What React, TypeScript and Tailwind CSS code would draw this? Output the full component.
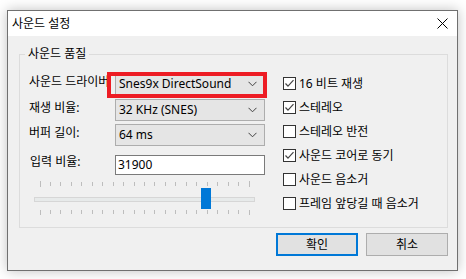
import React from "react";

const FONT = { fontFamily: '"Noto Sans", "Noto Sans CJK KR", sans-serif' };

function Chevron() {
  return (
    <svg width="9" height="6" viewBox="0 0 9 6" className="shrink-0">
      <polyline points="0.5,0.8 4.5,4.8 8.5,0.8" fill="none" stroke="#404040" strokeWidth="1" />
    </svg>
  );
}

function Combo({ value }: { value: string }) {
  return (
    <div className="flex items-center justify-between w-[150px] h-[22px] border border-[#adadad] bg-[#e5e5e5] pl-[3px] pr-[7px] text-[12px] text-black">
      <span>{value}</span>
      <Chevron />
    </div>
  );
}

function Check({ checked, label }: { checked?: boolean; label: string }) {
  return (
    <div className="flex items-center h-[13px] text-[12px] text-black">
      <div className="w-[13px] h-[13px] border border-[#333333] bg-white flex items-center justify-center">
        {checked && (
          <svg width="11" height="11" viewBox="0 0 11 11">
            <polyline points="1.5,5.5 4,8.2 9.5,2.2" fill="none" stroke="#444444" strokeWidth="1.2" />
          </svg>
        )}
      </div>
      <span className="ml-[3px] leading-[14px] whitespace-nowrap">{label}</span>
    </div>
  );
}

function Slider() {
  const ticks = Array.from({ length: 21 }, (_, i) => 5.5 + i * 10.45);
  return (
    <svg width="222" height="34" viewBox="0 0 222 34" className="block">
      {ticks.map((x, i) => {
        const end = i === 0 || i === 20;
        const px = Math.round(x) + 0.5;
        return (
          <g key={i} stroke="#bdbdbd" strokeWidth="1">
            <line x1={px} x2={px} y1={end ? 0 : 1} y2={end ? 6 : 5} />
            <line x1={px} x2={px} y1={29} y2={end ? 34 : 33} />
          </g>
        );
      })}
      <rect x="0.5" y="16.5" width="220" height="4" fill="#e7eaea" stroke="#d6d6d6" />
      <rect x="167" y="7" width="10" height="21" fill="#0078d7" />
    </svg>
  );
}

export default function App() {
  return (
    <div className="w-[466px] h-[279px] bg-white overflow-hidden" style={FONT}>
      <div className="ml-[7px] mt-[10px] w-[451px] h-[261px] border border-[#707070] bg-[#f0f0f0] shadow-[0_0_12px_rgba(0,0,0,0.25)] flex flex-col">
        {/* Title bar */}
        <div className="h-[25px] bg-white flex items-center justify-between pl-[4px] pr-[9px]">
          <span className="text-[12px] text-black leading-none">사운드 설정</span>
          <svg width="11" height="11" viewBox="0 0 11 11">
            <path d="M0.5 0.5 L10.5 10.5 M10.5 0.5 L0.5 10.5" stroke="#000" strokeWidth="1" />
          </svg>
        </div>

        {/* Group box */}
        <div className="relative mt-[18px] ml-[11px] w-[429px] h-[174px] border border-[#dcdcdc]">
          <span className="absolute left-[5px] top-[-8px] px-[3px] bg-[#f0f0f0] text-[12px] leading-[14px] text-black">
            사운드 품질
          </span>
          <div className="flex">
            {/* Left column */}
            <div className="flex flex-col pl-[9px] pt-[18px]">
              <div className="relative flex">
                <span className="w-[86px] overflow-hidden whitespace-nowrap text-[12px] leading-[18px] text-black">사운드 드라이버</span>
                <Combo value="Snes9x DirectSound" />
                <div className="absolute left-[78px] top-[-1px] w-[160px] h-[26px] border-4 border-[#ed1c24]" />
              </div>
              <div className="flex mt-[4px]">
                <span className="w-[86px] text-[12px] leading-[18px] text-black">재생 비율:</span>
                <Combo value="32 KHz (SNES)" />
              </div>
              <div className="flex mt-[3px]">
                <span className="w-[86px] text-[12px] leading-[18px] text-black">버퍼 길이:</span>
                <Combo value="64 ms" />
              </div>
              <div className="flex mt-[9px]">
                <span className="w-[86px] pl-[1px] text-[12px] leading-[14px] text-black">입력 비율:</span>
                <div className="w-[150px] h-[20px] border border-[#7a7a7a] bg-white pl-[2px] text-[12px] leading-[18px] text-black">
                  31900
                </div>
              </div>
              <div className="mt-[6px] ml-[5px]">
                <Slider />
              </div>
            </div>

            {/* Right column */}
            <div className="flex flex-col gap-[11px] ml-[18px] pt-[22px]">
              <Check checked label="16 비트 재생" />
              <Check checked label="스테레오" />
              <Check label="스테레오 반전" />
              <Check checked label="사운드 코어로 동기" />
              <Check label="사운드 음소거" />
              <Check label="프레임 앞당길 때 음소거" />
            </div>
          </div>
        </div>

        {/* Buttons */}
        <div className="flex justify-end gap-[8px] mt-[5px] pr-[9px]">
          <button className="w-[82px] h-[23px] border-2 border-[#0078d7] bg-[#e1e1e1] text-[12px] text-black leading-none">
            확인
          </button>
          <button className="w-[82px] h-[23px] border border-[#adadad] bg-[#e1e1e1] text-[12px] text-black leading-none">
            취소
          </button>
        </div>
      </div>
    </div>
  );
}
